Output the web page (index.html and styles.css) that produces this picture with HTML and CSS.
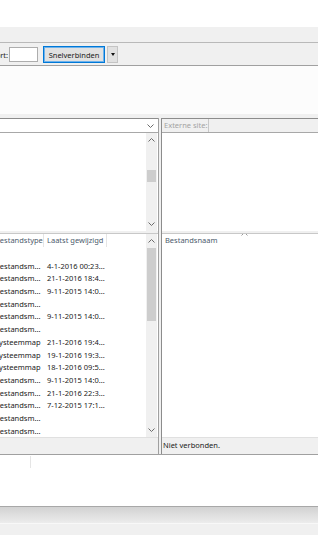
FILE: index.html
```html
<!DOCTYPE html>
<html>
<head>
  <title>FileZilla</title>
  <link rel="stylesheet" href="styles.css">
</head>
<body>
  <div class="window">
    <div class="titlebar"></div>
    <div class="menubar"></div>

    <div class="quickbar">
      <span class="qc-label">Poort:</span>
      <span class="qc-input"></span>
      <button class="qc-btn">Snelverbinden</button>
      <button class="qc-drop"><span class="tri"></span></button>
    </div>

    <div class="log"></div>
    <div class="split-h"></div>

    <div class="panes">
      <!-- local side -->
      <div class="pane local">
        <div class="path">
          <span class="path-input"></span>
          <svg class="chev" width="7" height="4" viewBox="0 0 7 4"><polyline points="0.5,0.5 3.5,3.5 6.5,0.5"/></svg>
        </div>
        <div class="tree">
          <div class="tree-body"></div>
          <div class="vscroll">
            <svg class="chev" width="7" height="4" viewBox="0 0 7 4"><polyline points="0.5,3.5 3.5,0.5 6.5,3.5"/></svg>
            <div class="track"><div class="thumb tree-thumb"></div></div>
            <svg class="chev" width="7" height="4" viewBox="0 0 7 4"><polyline points="0.5,0.5 3.5,3.5 6.5,0.5"/></svg>
          </div>
        </div>
        <div class="split-v"></div>
        <div class="list">
          <div class="list-body">
            <div class="row head">
              <span class="c1">Bestandstype</span>
              <span class="c2">Laatst gewijzigd</span>
            </div>
            <div id="localRows"></div>
          </div>
          <div class="vscroll">
            <svg class="chev" width="7" height="4" viewBox="0 0 7 4"><polyline points="0.5,3.5 3.5,0.5 6.5,3.5"/></svg>
            <div class="track"><div class="thumb list-thumb"></div></div>
            <svg class="chev" width="7" height="4" viewBox="0 0 7 4"><polyline points="0.5,0.5 3.5,3.5 6.5,0.5"/></svg>
          </div>
        </div>
        <div class="status"></div>
      </div>

      <div class="gutter"></div>

      <!-- remote side -->
      <div class="pane remote">
        <div class="path">
          <span class="path-label">Externe site:</span>
          <span class="path-input disabled"></span>
        </div>
        <div class="tree remote-tree"></div>
        <div class="split-v"></div>
        <div class="list remote-list">
          <div class="list-body">
            <div class="row head">
              <span class="r1">Bestandsnaam</span>
              <svg class="sort" width="7" height="4" viewBox="0 0 7 4"><polyline points="0.5,3.5 3.5,0.5 6.5,3.5"/></svg>
            </div>
          </div>
        </div>
        <div class="status">Niet verbonden.</div>
      </div>
    </div>

    <div class="queue">
      <span class="queue-col"></span>
    </div>
    <div class="tabs"></div>
    <div class="bottom"></div>
  </div>

  <script>
    // local file list: [type, modified]
    const files = [
      ["", ""],
      ["Bestandsm...", "4-1-2016 00:23..."],
      ["Bestandsm...", "21-1-2016 18:4..."],
      ["Bestandsm...", "9-11-2015 14:0..."],
      ["Bestandsm...", ""],
      ["Bestandsm...", "9-11-2015 14:0..."],
      ["Bestandsm...", ""],
      ["Systeemmap", "21-1-2016 19:4..."],
      ["Systeemmap", "19-1-2016 19:3..."],
      ["Systeemmap", "18-1-2016 09:5..."],
      ["Bestandsm...", "9-11-2015 14:0..."],
      ["Bestandsm...", "21-1-2016 22:3..."],
      ["Bestandsm...", "7-12-2015 17:1..."],
      ["Bestandsm...", ""],
      ["Bestandsm...", ""],
    ];

    const rows = document.getElementById('localRows');
    rows.innerHTML = files.map(f =>
      `<div class="row"><span class="c1">${f[0]}</span><span class="c2">${f[1]}</span></div>`
    ).join('');
  </script>
</body>
</html>
```

FILE: styles.css
```css
* {
  box-sizing: border-box;
}

body {
  margin: 0;
  font-family: "Noto Sans", "Open Sans", sans-serif;
  font-size: 7.5px;
  color: #1a1a1a;
  background: #f0f0f0;
}

.window {
  width: 318px;
  height: 535px;
  overflow: hidden;
  display: flex;
  flex-direction: column;
}

.titlebar {
  height: 27px;
  background: #ffffff;
}

.menubar {
  height: 16px;
  background: #f0f0f0;
  border-bottom: 1px solid #b9b9b9;
}

/* quick connect */
.quickbar {
  height: 23px;
  display: flex;
  align-items: center;
  background: #f0f0f0;
  border-bottom: 1px solid #a0a0a0;
  padding-top: 1px;
}

.qc-label {
  width: 9px;
  display: flex;
  justify-content: flex-end;
  white-space: nowrap;
  overflow: hidden;
  padding-right: 1px;
}

.qc-input {
  width: 29px;
  height: 15px;
  background: #fff;
  border: 1px solid #adadad;
}

.qc-btn {
  margin-left: 5px;
  width: 62px;
  height: 17px;
  padding: 0;
  font: inherit;
  color: #1a1a1a;
  background: #e1e1e1;
  border: 1px solid #0078d7;
  box-shadow: inset 0 0 0 1px #6fb2ea;
}

.qc-drop {
  margin-left: 2px;
  width: 11px;
  height: 17px;
  padding: 0;
  background: #e1e1e1;
  border: 1px solid #c4c4c4;
  display: flex;
  align-items: center;
  justify-content: center;
}

.tri {
  width: 0;
  height: 0;
  border-left: 2.5px solid transparent;
  border-right: 2.5px solid transparent;
  border-top: 3px solid #111;
}

.log {
  height: 48px;
  background: #fcfcfc;
}

.split-h {
  height: 4px;
  background: #f0f0f0;
}

/* panes */
.panes {
  display: flex;
  height: 336px;
}

.pane {
  display: flex;
  flex-direction: column;
}

.pane.local {
  width: 159px;
  border-right: 1px solid #a0a0a0;
}

.gutter {
  width: 2px;
  background: #f0f0f0;
}

.pane.remote {
  flex: 1;
  border-left: 1px solid #8c8c8c;
}

.path {
  height: 15px;
  display: flex;
  align-items: center;
  border-top: 1px solid #8c8c8c;
  border-bottom: 1px solid #a8a8a8;
  background: #fff;
}

.local .path {
  padding-right: 4px;
}

.path-input {
  flex: 1;
  height: 100%;
}

.path-input.disabled {
  background: #f0f0f0;
}

.path-label {
  width: 47px;
  height: 100%;
  padding-left: 2px;
  line-height: 13px;
  color: #a3a3a3;
  background: #f0f0f0;
  border-right: 1px solid #c8c8c8;
  white-space: nowrap;
  overflow: hidden;
}

.chev {
  display: block;
  fill: none;
  stroke: #6b6b6b;
  stroke-width: 1;
}

.tree {
  height: 98px;
  display: flex;
  background: #fff;
}

.tree-body,
.list-body {
  flex: 1;
  overflow: hidden;
}

.vscroll {
  width: 11px;
  background: #f0f0f0;
  display: flex;
  flex-direction: column;
  align-items: center;
  padding: 5px 0 5px;
  margin-right: 1px;
}

.track {
  flex: 1;
  width: 100%;
  padding: 0 1px;
}

.thumb {
  background: #cdcdcd;
  width: 9px;
}

.tree-thumb {
  margin-top: 28px;
  height: 12px;
}

.list-thumb {
  margin-top: 5px;
  height: 73px;
}

.split-v {
  height: 3px;
  background: #f0f0f0;
  border-bottom: 1px solid #c8c8c8;
}

.list {
  height: 203px;
  display: flex;
  background: #fff;
}

.row {
  display: grid;
  grid-template-columns: 52px 63px;
  height: 12.7px;
  line-height: 12.7px;
  margin-left: -8px;
  white-space: nowrap;
}

.row span {
  padding-left: 3px;
  overflow: hidden;
}

.row.head {
  height: 13px;
  line-height: 13px;
  color: #4c5a6c;
}

.row.head .c1,
.row.head .c2 {
  border-right: 1px solid #e5e5e5;
}

.remote-list .row.head {
  display: flex;
  margin-left: 0;
  position: relative;
}

.r1 {
  padding-left: 3px;
}

.sort {
  position: absolute;
  left: 79px;
  top: -2px;
  fill: none;
  stroke: #9a9a9a;
}

.status {
  height: 17px;
  line-height: 15px;
  padding-left: 1px;
  background: #f0f0f0;
  border-top: 1px solid #e0e0e0;
}

.queue {
  height: 52px;
  background: #fff;
  border-top: 1px solid #a0a0a0;
  padding: 1px 0 0 30px;
}

.queue-col {
  display: block;
  width: 1px;
  height: 12px;
  background: #e5e5e5;
}

.tabs {
  height: 17px;
  border-top: 1px solid #a8a8a8;
  background: linear-gradient(#d2d2d2, #ececec);
}

.bottom {
  flex: 1;
  background: #f0f0f0;
  border-top: 1px solid #f8f8f8;
}
```
